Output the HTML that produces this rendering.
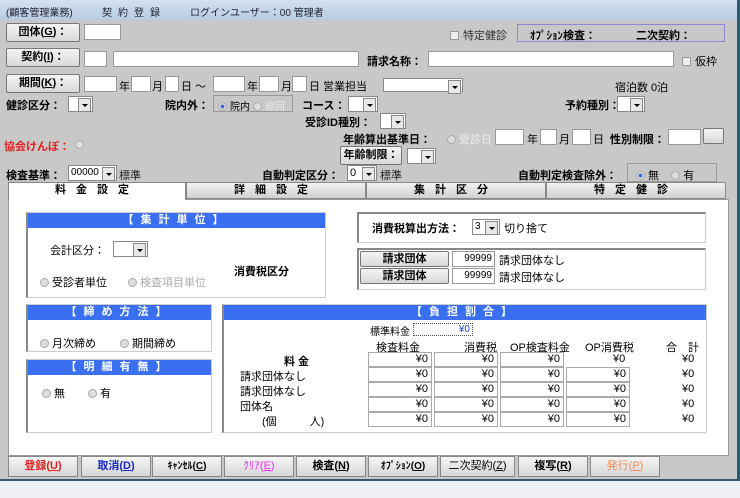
<!DOCTYPE html>
<html><head><meta charset="utf-8"><style>
*{margin:0;padding:0;box-sizing:border-box}
body{width:740px;height:498px;background:#eef0f4;font-family:"Liberation Sans","Noto Sans CJK JP",sans-serif;font-size:11px;color:#000;position:relative;overflow:hidden}
#win{position:absolute;left:0;top:0;width:740px;height:481px;background:#c8c8c8;border-right:3px solid #2d5a6e;border-bottom:2px solid #2d5a6e}
#title{position:absolute;left:0;top:0;width:737px;height:20px;background:linear-gradient(#d3e1f0,#b7cbe2);font-size:10px;color:#223}
.a{position:absolute;white-space:nowrap}
.b{position:absolute;font-weight:bold;white-space:nowrap}
.btn{position:absolute;background:linear-gradient(#f4f4f4,#d8d8d8);border:1px solid #777;border-radius:2px;font-weight:bold;text-align:center;font-size:11px}
.in{position:absolute;background:#fff;border:1px solid #999;height:16px}
.dd{position:absolute;background:#fff;border:1px solid #888;height:16px}
.dd:after{content:"";position:absolute;right:1px;top:1px;width:11px;height:12px;background:#e8e8e8 ;border:1px solid #888}
.dd i{position:absolute;right:4px;top:7px;border-left:3px solid transparent;border-right:3px solid transparent;border-top:3px solid #000;z-index:2}
.rd{display:inline-block;width:9px;height:9px;border-radius:50%;background:#ddd;border:1px solid #aaa;vertical-align:-1px;margin-right:3px}
.rs{background:radial-gradient(#3a6fd0 35%,#ddd 45%)}
.cb{display:inline-block;width:9px;height:9px;background:#eee;border:1px solid #999;vertical-align:-1px;margin-right:4px}
.tab{position:absolute;top:182px;height:17px;background:linear-gradient(#f2f2f2,#d0d0d0);border:1px solid #888;font-weight:bold;text-align:center;letter-spacing:10px;font-size:11px;line-height:15px}
.box{position:absolute;background:#fff;border:1px solid #ccc;border-left:2px solid #888}
.hd{position:absolute;left:0;right:0;top:0;height:15px;background:#3a6ff2;color:#fff;font-weight:bold;text-align:center;letter-spacing:7px;line-height:15px}
.ci{position:absolute;background:#fff;border:1px solid #aaa;height:15px;width:64px;text-align:right;padding-right:3px;line-height:13px}
.bb{position:absolute;top:456px;height:21px;width:70px;background:linear-gradient(#f6f6f6,#d6d6d6);border:1px solid #888;font-weight:bold;text-align:center;line-height:19px}
</style></head><body>
<div id="win">
<div id="title"><span class="a" style="left:6px;top:4px">(顧客管理業務)</span><span class="a" style="left:102px;top:4px;letter-spacing:6px">契約登録</span><span class="a" style="left:190px;top:4px">ログインユーザー：00 管理者</span></div>

<div class="btn" style="left:6px;top:23px;width:74px;height:19px;line-height:17px">団体(<u>G</u>)：</div>
<div class="in" style="left:84px;top:24px;width:37px"></div>
<span class="a" style="left:450px;top:27px;color:#333"><span class="cb"></span>特定健診</span>
<div class="a" style="left:517px;top:24px;width:208px;height:18px;border:1px solid #8a8ad0;background:#c8c8c8"></div>
<span class="b" style="left:530px;top:27px">ｵﾌﾟｼｮﾝ検査：</span><span class="b" style="left:636px;top:27px">二次契約：</span>

<div class="btn" style="left:6px;top:48px;width:74px;height:19px;line-height:17px">契約(<u>I</u>)：</div>
<div class="in" style="left:84px;top:51px;width:23px"></div>
<div class="in" style="left:113px;top:51px;width:246px"></div>
<span class="b" style="left:367px;top:53px">請求名称：</span>
<div class="in" style="left:428px;top:51px;width:246px"></div>
<span class="a" style="left:682px;top:53px"><span class="cb"></span>仮枠</span>

<div class="btn" style="left:6px;top:74px;width:74px;height:19px;line-height:17px">期間(<u>K</u>)：</div>
<div class="in" style="left:84px;top:76px;width:33px"></div><span class="a" style="left:119px;top:78px">年</span>
<div class="in" style="left:131px;top:76px;width:20px"></div><span class="a" style="left:152px;top:78px">月</span>
<div class="in" style="left:165px;top:76px;width:14px"></div><span class="a" style="left:181px;top:78px">日 ～</span>
<div class="in" style="left:213px;top:76px;width:32px"></div><span class="a" style="left:247px;top:78px">年</span>
<div class="in" style="left:259px;top:76px;width:20px"></div><span class="a" style="left:281px;top:78px">月</span>
<div class="in" style="left:292px;top:76px;width:15px"></div><span class="a" style="left:309px;top:78px">日 営業担当</span>
<div class="dd" style="left:383px;top:78px;width:80px;height:14px"><i></i></div>
<span class="a" style="left:615px;top:79px">宿泊数 0泊</span>

<span class="b" style="left:6px;top:97px">健診区分：</span><div class="dd" style="left:68px;top:96px;width:25px"><i></i></div>
<span class="b" style="left:165px;top:97px">院内外：</span>
<div class="a" style="left:213px;top:95px;width:80px;height:17px;border:1px solid #999;background:#c8c8c8;font-size:10px;padding:2px 4px"><span class="rd rs"></span>院内 <span class="rd"></span><span style="color:#eee">巡回</span></div>
<span class="b" style="left:302px;top:97px">コース：</span><div class="dd" style="left:348px;top:96px;width:30px"><i></i></div>
<span class="b" style="left:565px;top:97px">予約種別：</span><div class="dd" style="left:617px;top:96px;width:28px"><i></i></div>

<span class="b" style="left:305px;top:114px">受診ID種別：</span><div class="dd" style="left:380px;top:113px;width:26px"><i></i></div>

<span class="b" style="left:4px;top:138px;color:#e02020">協会けんぽ：</span><span class="a" style="left:75px;top:139px"><span class="rd"></span></span>
<span class="b" style="left:343px;top:131px">年齢算出基準日：</span>
<span class="a" style="left:447px;top:131px;color:#eee"><span class="rd"></span>受診日</span>
<div class="in" style="left:495px;top:129px;width:29px"></div><span class="a" style="left:527px;top:131px">年</span>
<div class="in" style="left:540px;top:129px;width:17px"></div><span class="a" style="left:559px;top:131px">月</span>
<div class="in" style="left:572px;top:129px;width:19px"></div><span class="a" style="left:593px;top:131px">日</span>
<span class="b" style="left:610px;top:131px">性別制限：</span>
<div class="in" style="left:668px;top:129px;width:33px"></div>
<div class="btn" style="left:703px;top:128px;width:21px;height:16px"></div>

<div class="btn" style="left:340px;top:146px;width:62px;height:19px;line-height:17px">年齢制限：</div>
<div class="dd" style="left:407px;top:148px;width:29px"><i></i></div>

<span class="b" style="left:6px;top:167px">検査基準：</span>
<div class="dd" style="left:68px;top:165px;width:49px;font-size:10px;padding-left:2px;line-height:14px">00000<i></i></div><span class="a" style="left:119px;top:167px;color:#222">標準</span>
<span class="b" style="left:262px;top:167px">自動判定区分：</span>
<div class="dd" style="left:347px;top:165px;width:30px;padding-left:2px;line-height:14px">0<i></i></div><span class="a" style="left:380px;top:167px;color:#222">標準</span>
<span class="b" style="left:518px;top:167px">自動判定検査除外：</span>
<div class="a" style="left:627px;top:163px;width:90px;height:19px;border:1px solid #999;background:#c8c8c8;padding:3px 8px"><span class="rd rs"></span>無 &nbsp;&nbsp;&nbsp;<span class="rd"></span>有</div>

<div class="a" style="left:8px;top:199px;width:721px;height:257px;background:#fff;border:1px solid #999"></div>
<div class="tab" style="left:8px;width:178px;background:#fff;border-bottom:none;height:18px">料金設定</div>
<div class="tab" style="left:186px;width:180px">詳細設定</div>
<div class="tab" style="left:366px;width:180px">集計区分</div>
<div class="tab" style="left:546px;width:180px">特定健診</div>

<div class="box" style="left:26px;top:212px;width:300px;height:86px"><div class="hd">【集計単位】</div></div>
<span class="b" style="left:50px;top:242px;font-weight:normal">会計区分：</span><div class="dd" style="left:113px;top:241px;width:35px"><i></i></div>
<span class="b" style="left:234px;top:263px">消費税区分</span>
<span class="a" style="left:40px;top:274px"><span class="rd"></span>受診者単位</span>
<span class="a" style="left:128px;top:274px;color:#aaa"><span class="rd"></span>検査項目単位</span>

<div class="a" style="left:357px;top:212px;width:349px;height:31px;background:#fff;border:1px solid #ccc;border-top:2px solid #888;border-left:2px solid #888"></div>
<span class="b" style="left:372px;top:220px">消費税算出方法：</span>
<div class="dd" style="left:472px;top:219px;width:28px;padding-left:2px;line-height:14px;font-size:10px">3<i></i></div><span class="a" style="left:504px;top:220px">切り捨て</span>

<div class="a" style="left:357px;top:248px;width:349px;height:42px;background:#fff;border:1px solid #ccc;border-top:2px solid #888;border-left:2px solid #888"></div>
<div class="btn" style="left:360px;top:251px;width:89px;height:16px;line-height:14px">請求団体</div>
<div class="btn" style="left:360px;top:268px;width:89px;height:16px;line-height:14px">請求団体</div>
<div class="in" style="left:452px;top:251px;width:43px;height:16px;text-align:right;font-size:10px;padding-right:2px;line-height:14px">99999</div>
<div class="in" style="left:452px;top:268px;width:43px;height:16px;text-align:right;font-size:10px;padding-right:2px;line-height:14px">99999</div>
<span class="a" style="left:499px;top:252px">請求団体なし</span><span class="a" style="left:499px;top:269px">請求団体なし</span>

<div class="box" style="left:26px;top:304px;width:186px;height:48px"><div class="hd">【締め方法】</div></div>
<span class="a" style="left:40px;top:335px"><span class="rd"></span>月次締め</span>
<span class="a" style="left:120px;top:335px"><span class="rd"></span>期間締め</span>
<div class="box" style="left:26px;top:359px;width:186px;height:74px"><div class="hd">【明細有無】</div></div>
<span class="a" style="left:42px;top:385px"><span class="rd"></span>無</span>
<span class="a" style="left:88px;top:385px"><span class="rd"></span>有</span>

<div class="box" style="left:222px;top:304px;width:485px;height:129px"><div class="hd">【負担割合】</div></div>
<span class="a" style="left:370px;top:323px;font-size:10px">標準料金</span>
<div class="a" style="left:413px;top:323px;width:60px;height:13px;border:1px dotted #555;text-align:right;color:#2244cc;font-size:10px;padding-right:2px;line-height:11px">¥0</div>
<span class="a" style="left:376px;top:339px">検査料金</span><span class="a" style="left:464px;top:339px">消費税</span>
<span class="a" style="left:510px;top:339px">OP検査料金</span><span class="a" style="left:585px;top:339px">OP消費税</span><span class="a" style="left:666px;top:339px">合　計</span>
<span class="b" style="left:284px;top:353px">料 金</span>
<span class="a" style="left:240px;top:368px">請求団体なし</span>
<span class="a" style="left:240px;top:383px">請求団体なし</span>
<span class="a" style="left:240px;top:398px">団体名</span>
<span class="a" style="left:262px;top:413px">(個　　　人)</span>
<div id="grid"></div>
</div>
<div class="bb" style="left:8px;color:#e02020"><span>登録(<u>U</u>)</span></div>
<div class="bb" style="left:81px;color:#1a2cc0">取消(<u>D</u>)</div>
<div class="bb" style="left:152px;font-size:10px">ｷｬﾝｾﾙ(<u>C</u>)</div>
<div class="bb" style="left:224px;color:#e030e0;font-weight:normal">ｸﾘｱ(<u>E</u>)</div>
<div class="bb" style="left:296px">検査(<u>N</u>)</div>
<div class="bb" style="left:368px;font-size:10px">ｵﾌﾟｼｮﾝ(<u>O</u>)</div>
<div class="bb" style="left:440px;width:75px;font-weight:normal">二次契約(<u>Z</u>)</div>
<div class="bb" style="left:518px">複写(<u>R</u>)</div>
<div class="bb" style="left:590px;color:#f08a50;font-weight:normal">発行(<u>P</u>)</div>
<script>
var g=document.getElementById('grid'),h='';
var xs=[368,434,500,566];
for(var r=0;r<5;r++){var y=352+r*15;
for(var c=0;c<4;c++){ if(r==0&&c==3){h+='<span class="a" style="left:'+(xs[c]+47)+'px;top:'+(y+1)+'px">¥0</span>';continue;}
h+='<div class="ci" style="left:'+xs[c]+'px;top:'+y+'px">¥0</div>';}
h+='<span class="a" style="left:682px;top:'+(y+1)+'px">¥0</span>';}
g.outerHTML=h;
</script>
</body></html>
